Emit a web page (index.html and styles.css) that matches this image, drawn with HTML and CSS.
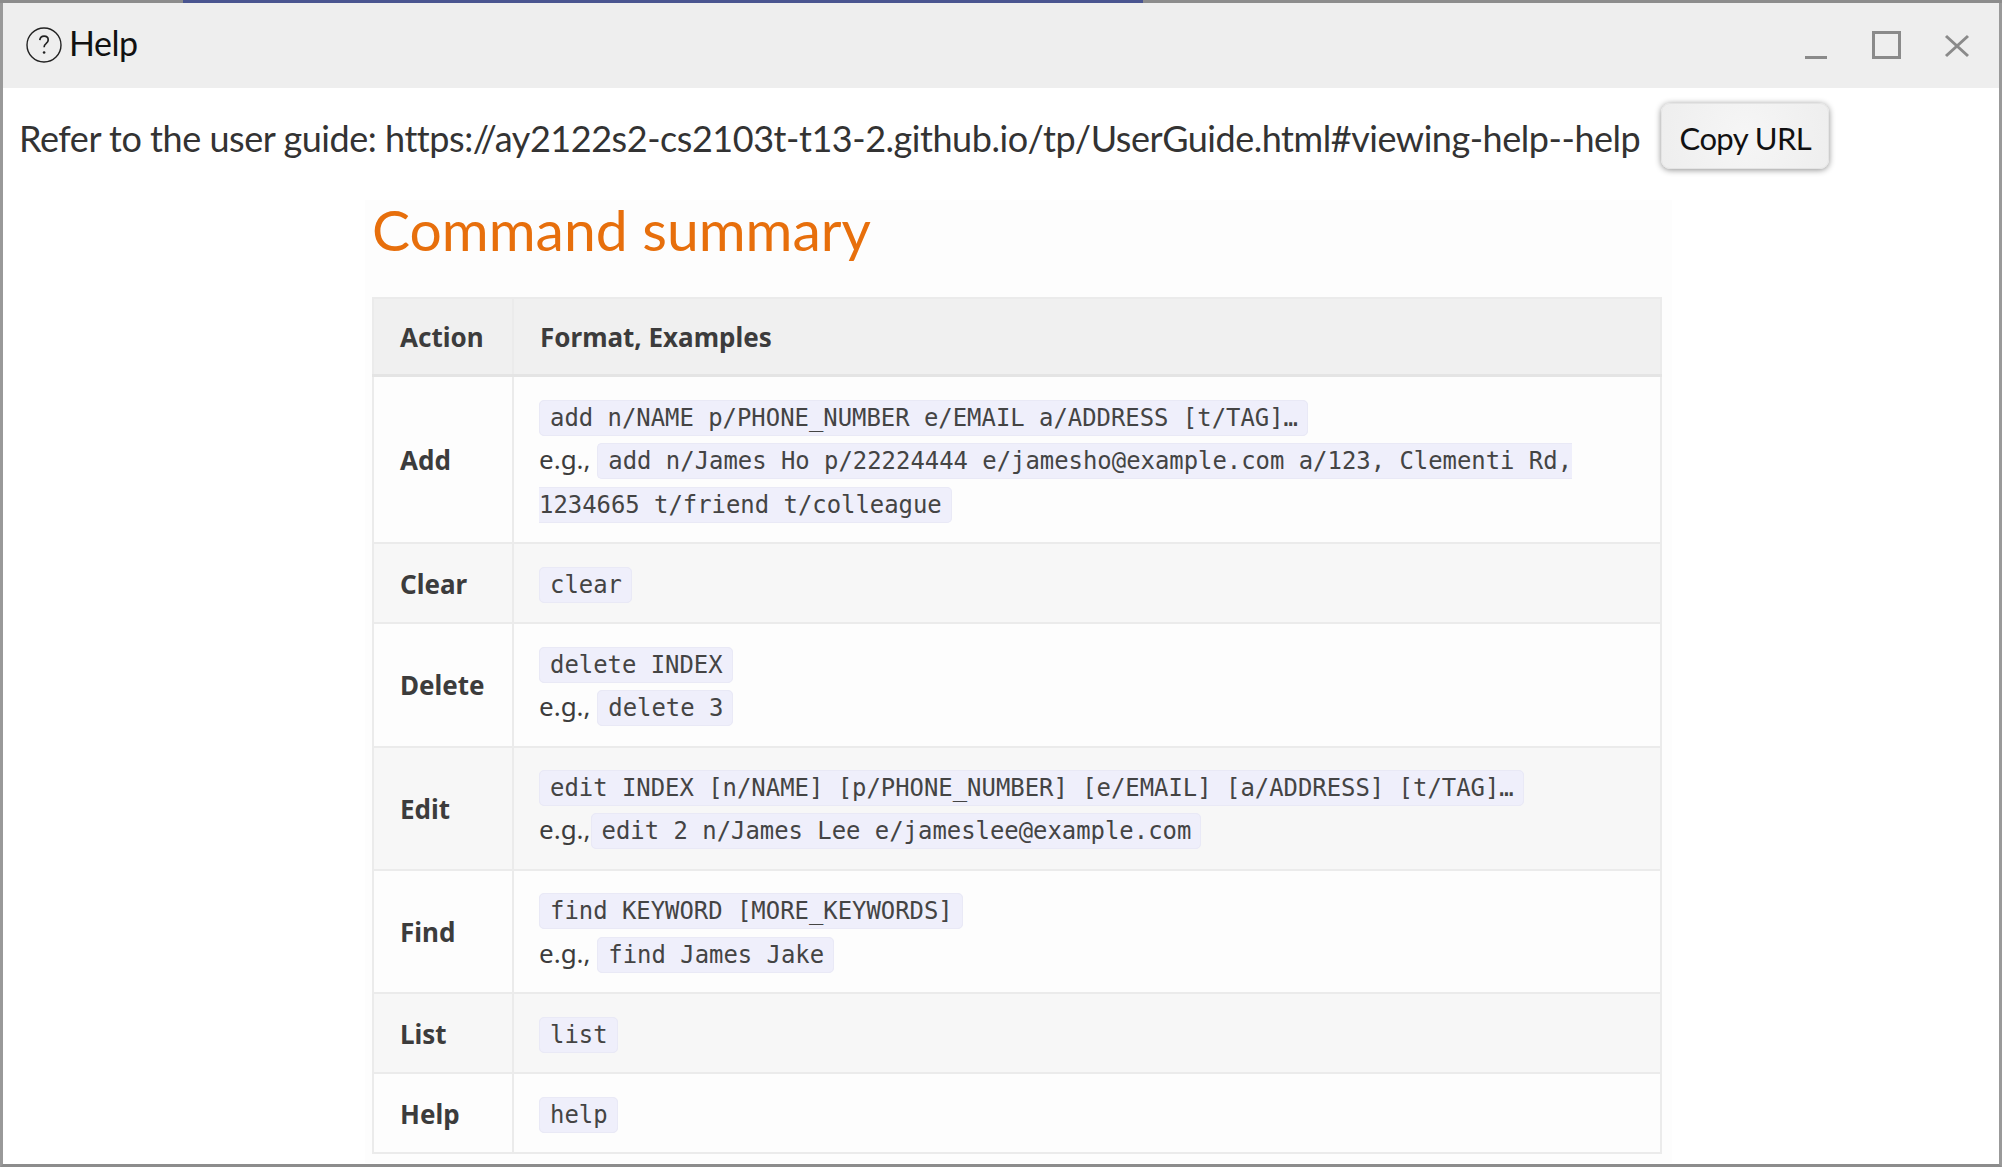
FILE: index.html
```html
<!DOCTYPE html>
<html lang="en">
<head>
    <meta charset="UTF-8">
    <title>Help</title>
    <link rel="stylesheet" href="styles.css">
</head>
<body>

<div class="top-strip"><div class="top-strip-blue"></div></div>

<div class="window">
    <!-- Title bar -->
    <div class="titlebar">
        <svg class="help-icon" width="36" height="36" viewBox="0 0 36 36">
            <circle cx="18" cy="18" r="17" fill="none" stroke="#222" stroke-width="1.4"/>
            <path d="M13.8 13.2c.3-2.6 2-4 4.3-4 2.4 0 4.1 1.5 4.1 3.7 0 1.800-1 2.700-2.200 3.700-1.300 1-1.900 1.700-1.900 3.600" fill="none" stroke="#222" stroke-width="1.700"/>
            <circle cx="18.100" cy="25.500" r="1.300" fill="#222"/>
        </svg>
        <span class="title">Help</span>
        <div class="win-controls">
            <div class="win-min"></div>
            <div class="win-max"></div>
            <svg class="win-close" width="26" height="24" viewBox="0 0 26 24">
                <path d="M2 2L24 22M24 2L2 22" fill="none" stroke="#8a8a8a" stroke-width="3"/>
            </svg>
        </div>
    </div>

    <!-- Link to the user guide -->
    <div class="guide-row">
        <span class="guide-text">Refer to the user guide: https://ay2122s2-cs2103t-t13-2.github.io/tp/UserGuide.html#viewing-help--help</span>
        <button class="copy-btn" type="button">Copy URL</button>
    </div>

    <!-- Command summary -->
    <div class="summary">
        <h1>Command summary</h1>
        <table>
            <thead>
                <tr><th>Action</th><th>Format, Examples</th></tr>
            </thead>
            <tbody>
                <tr>
                    <td>Add</td>
                    <td><code>add n/NAME p/PHONE_NUMBER e/EMAIL a/ADDRESS [t/TAG]…</code><br>e.g., <code class="code-head">add n/James Ho p/22224444 e/jamesho@example.com a/123, Clementi Rd,</code><br><code class="code-tail">1234665 t/friend t/colleague</code></td>
                </tr>
                <tr>
                    <td>Clear</td>
                    <td><code>clear</code></td>
                </tr>
                <tr>
                    <td>Delete</td>
                    <td><code>delete INDEX</code><br>e.g., <code>delete 3</code></td>
                </tr>
                <tr>
                    <td>Edit</td>
                    <td><code>edit INDEX [n/NAME] [p/PHONE_NUMBER] [e/EMAIL] [a/ADDRESS] [t/TAG]…</code><br>e.g.,<code>edit 2 n/James Lee e/jameslee@example.com</code></td>
                </tr>
                <tr>
                    <td>Find</td>
                    <td><code>find KEYWORD [MORE_KEYWORDS]</code><br>e.g., <code>find James Jake</code></td>
                </tr>
                <tr>
                    <td>List</td>
                    <td><code>list</code></td>
                </tr>
                <tr>
                    <td>Help</td>
                    <td><code>help</code></td>
                </tr>
            </tbody>
        </table>
    </div>
</div>

</body>
</html>
```

FILE: styles.css
```css
* { box-sizing: border-box; }
html, body { margin: 0; height: 100%; overflow: hidden; background: #fff; }
body { font-family: "Noto Sans", sans-serif; color: #333; }

.top-strip { height: 3px; background: #8c8c8c; }
.top-strip-blue { width: 960px; height: 3px; margin-left: 183px; background: #4a5590; }

.window { height: 1164px; border-left: 3px solid #999; border-right: 3px solid #999; border-bottom: 3px solid #8c8c8c; overflow: hidden; }

.titlebar { display: flex; align-items: center; height: 85px; padding: 0 29px 0 23px; background: #eeeeee; color: #111; }
.help-icon { flex: none; margin-right: 7px; margin-top: -2px; }
.title { font-family: Lato, sans-serif; font-size: 34px; letter-spacing: -0.5px; line-height: 44px; margin-top: -6px; }
.win-controls { display: flex; align-items: center; margin-left: auto; }
.win-min { width: 22px; height: 3px; margin: 24px 45px 0 0; background: #8a8a8a; }
.win-max { width: 29px; height: 28px; margin-right: 43px; margin-top: -2px; border: 3px solid #8a8a8a; }
.win-close { display: block; }

.guide-row { display: flex; align-items: center; height: 96px; padding-left: 16px; }
.guide-text { font-family: Lato, sans-serif; font-size: 36px; letter-spacing: -0.46px; white-space: nowrap; margin-right: 21px; margin-top: 4px; }
.copy-btn { flex: none; width: 168px; height: 66px; padding: 3px 0 0; font-family: Lato, sans-serif; font-size: 31px; letter-spacing: -0.6px; color: #111; background: radial-gradient(circle, #f6f6f6, #eeeeee); border: 1px solid #e4e4e4; border-radius: 9px; box-shadow: 0 1px 6px rgba(0, 0, 0, 0.45); }

.summary { width: 1307px; height: 963px; margin: 16px 0 0 362px; padding: 0 9px 0 7px; background: #fdfdfd; }
.summary h1 { margin: 0; height: 97px; font-family: Lato, sans-serif; font-size: 57px; line-height: 58px; font-weight: 400; color: #e76f0c; }

table { width: 1290px; border-collapse: collapse; table-layout: fixed; font-size: 26px; color: #3c3c3c; }
th, td { padding: 17.3px 26px; line-height: 43.4px; border: 2px solid #ebebeb; text-align: left; font-weight: 400; }
th:first-child { width: 140px; }
th { padding: 17px 26px 15px; font-weight: 700; background: #f0f0f0; border-bottom: 3px solid #e4e4e4; }
td:first-child { padding-top: 18.3px; padding-bottom: 16.3px; font-weight: 700; }
td:last-child { padding-left: 25px; }
tbody tr:nth-child(even) { background: #f7f7f7; }
code { padding: 3px 9px 3px 10px; font-family: "DejaVu Sans Mono", monospace; font-size: 23.9px; line-height: 1; color: #444; background: #efeffb; border: 1px solid #e9e9f6; border-radius: 5px; }
.code-head { padding-right: 0; border-right: 0; border-radius: 5px 0 0 5px; }
.code-tail { padding-left: 0; border-left: 0; border-radius: 0 5px 5px 0; }
```
